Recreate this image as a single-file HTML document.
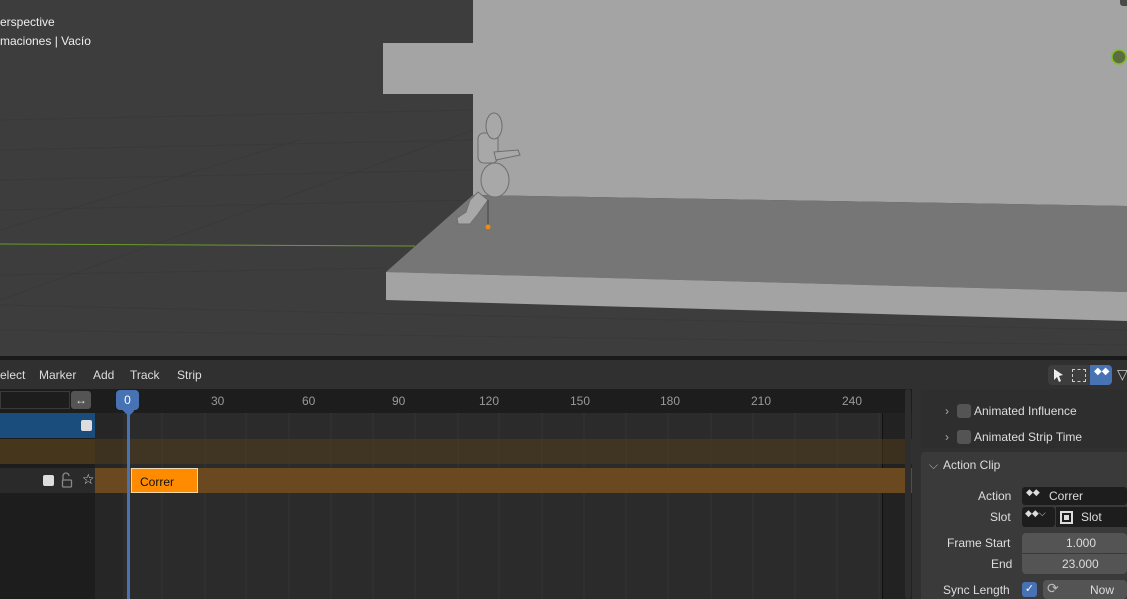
<!DOCTYPE html>
<html><head><meta charset="utf-8"><style>
*{margin:0;padding:0;box-sizing:border-box}
body{width:1127px;height:599px;overflow:hidden;background:#3d3d3d;font-family:"Liberation Sans","DejaVu Sans",sans-serif;font-size:12px;color:#ddd;position:relative}
.a{position:absolute}
.t{position:absolute;white-space:nowrap}
</style></head><body>
<svg class="a" style="left:0;top:0" width="1127" height="360">
<rect width="1127" height="360" fill="#3d3d3d"/>
<g stroke="#393939" stroke-width="1">
<line x1="0" y1="120" x2="473" y2="110"/><line x1="0" y1="150" x2="473" y2="140"/><line x1="0" y1="180" x2="473" y2="170"/>
<line x1="0" y1="210" x2="473" y2="200"/><line x1="0" y1="275" x2="386" y2="268"/><line x1="0" y1="305" x2="1127" y2="330"/>
<line x1="0" y1="330" x2="1127" y2="345"/><line x1="0" y1="230" x2="300" y2="140"/><line x1="0" y1="300" x2="473" y2="130"/>
</g>
<polygon points="473,0 1127,0 1127,206 473,195" fill="#a4a4a4"/>
<rect x="383" y="43" width="92" height="51" fill="#a4a4a4"/>
<line x1="0" y1="244" x2="415" y2="246" stroke="#6a9a2a" stroke-width="1"/>
<polygon points="473,195 1127,206 1127,292 386,272" fill="#767676"/>
<polygon points="386,272 1127,292 1127,321 386,300" fill="#a3a3a3"/>
<g fill="#a8a8a8" stroke="#6e6e6e" stroke-width="1">
<path d="M470 200 L478 192 L488 200 L478 214 L470 224 L458 224 L457 218 L466 212Z"/>
<ellipse cx="495" cy="180" rx="14" ry="17"/>
<rect x="478" y="133" width="20" height="30" rx="6"/>
<path d="M494 152 L518 150 L520 155 L496 160Z"/>
<ellipse cx="494" cy="126" rx="8" ry="13"/>
</g>
<line x1="488" y1="200" x2="488" y2="227" stroke="#444"/>
<circle cx="488" cy="227" r="2.5" fill="#f08a10"/>
<circle cx="1119" cy="57" r="7" fill="#5c6e40" stroke="#7bc020" stroke-width="1.5"/>
<rect x="1120" y="-4" width="12" height="10" rx="3" fill="#4a4a4a"/>
<rect x="0" y="356" width="1127" height="4" fill="#1a1a1a"/>
</svg>
<div class="t" style="left:0;top:15px;color:#eee;font-size:12px">erspective</div>
<div class="t" style="left:0;top:34px;color:#eee;font-size:12px">maciones | Vacío</div>

<!-- header -->
<div class="a" style="left:0;top:360px;width:1127px;height:29px;background:#303030"></div>
<div class="t" style="left:0;top:368px">elect</div>
<div class="t" style="left:39px;top:368px">Marker</div>
<div class="t" style="left:93px;top:368px">Add</div>
<div class="t" style="left:130px;top:368px">Track</div>
<div class="t" style="left:177px;top:368px">Strip</div>
<div class="a" style="left:1048px;top:365px;width:64px;height:20px;background:#3d3d3d;border-radius:4px"></div>
<div class="a" style="left:1090px;top:365px;width:22px;height:20px;background:#4772b3;border-radius:0 4px 4px 0"></div>
<svg class="a" style="left:1050px;top:366px" width="16" height="18"><path d="M4 3 L13 9 L9 10 L11 15 L9 16 L7 11 L4 14Z" fill="#eee"/></svg>
<div class="a" style="left:1072px;top:369px;width:14px;height:13px;border:1px dashed #ccc"></div>
<div class="t" style="left:1094px;top:366px;color:#fff;font-size:10px">◆◆</div>
<div class="t" style="left:1117px;top:366px;color:#ccc;font-size:14px">▽</div>

<!-- left channel panel -->
<div class="a" style="left:0;top:389px;width:95px;height:210px;background:#1d1d1d"></div>
<div class="a" style="left:0;top:391px;width:70px;height:18px;background:#1d1d1d;border:1px solid #3a3a3a"></div>
<div class="a" style="left:71px;top:391px;width:20px;height:18px;background:#545454;border-radius:3px;color:#ddd;text-align:center;line-height:18px">↔</div>
<div class="a" style="left:0;top:413px;width:95px;height:25px;background:#1a4c7c"></div>
<div class="a" style="left:81px;top:420px;width:11px;height:11px;background:#ddd;border-radius:2px"></div>
<div class="a" style="left:0;top:439px;width:95px;height:25px;background:#45361c"></div>
<div class="a" style="left:0;top:468px;width:95px;height:25px;background:#2a2a2a"></div>
<div class="a" style="left:43px;top:475px;width:11px;height:11px;background:#ddd;border-radius:2px"></div>
<svg class="a" style="left:60px;top:472px" width="14" height="16"><path d="M3 8 V4 a3 3 0 0 1 6 0" stroke="#888" fill="none" stroke-width="1.3"/><rect x="2.5" y="8" width="9" height="7" rx="1" stroke="#888" fill="none" stroke-width="1.3"/></svg>
<div class="t" style="left:82px;top:471px;color:#ddd;font-size:14px">☆</div>

<!-- timeline -->
<div class="a" style="left:95px;top:389px;width:817px;height:24px;background:#1d1d1d"></div>
<div class="a" style="left:95px;top:413px;width:817px;height:186px;background:#2b2b2b"></div>
<div class="a" style="left:882px;top:413px;width:30px;height:186px;background:#222"></div>
<div class="a" style="left:882px;top:413px;width:1px;height:186px;background:#111"></div>
<svg class="a" style="left:95px;top:413px" width="787" height="186"><g stroke="#333">
<line x1="67" y1="0" x2="67" y2="186"/><line x1="110" y1="0" x2="110" y2="186"/><line x1="151" y1="0" x2="151" y2="186"/><line x1="194" y1="0" x2="194" y2="186"/><line x1="236" y1="0" x2="236" y2="186"/><line x1="278" y1="0" x2="278" y2="186"/><line x1="320" y1="0" x2="320" y2="186"/><line x1="363" y1="0" x2="363" y2="186"/><line x1="404" y1="0" x2="404" y2="186"/><line x1="447" y1="0" x2="447" y2="186"/><line x1="489" y1="0" x2="489" y2="186"/><line x1="531" y1="0" x2="531" y2="186"/><line x1="573" y1="0" x2="573" y2="186"/><line x1="616" y1="0" x2="616" y2="186"/><line x1="658" y1="0" x2="658" y2="186"/><line x1="700" y1="0" x2="700" y2="186"/><line x1="742" y1="0" x2="742" y2="186"/><line x1="784" y1="0" x2="784" y2="186"/></g></svg>
<div class="a" style="left:95px;top:413px;width:28px;height:186px;background:#262626"></div>
<div class="a" style="left:95px;top:439px;width:817px;height:25px;background:rgba(90,65,25,0.45)"></div>
<div class="a" style="left:95px;top:468px;width:817px;height:25px;background:#6a4820"></div>
<div class="a" style="left:905px;top:389px;width:6px;height:210px;background:#2e2e2e;border-radius:3px"></div>
<div class="t" style="left:211px;top:394px;color:#999;font-size:12px">30</div>
<div class="t" style="left:302px;top:394px;color:#999">60</div>
<div class="t" style="left:392px;top:394px;color:#999">90</div>
<div class="t" style="left:479px;top:394px;color:#999">120</div>
<div class="t" style="left:570px;top:394px;color:#999">150</div>
<div class="t" style="left:660px;top:394px;color:#999">180</div>
<div class="t" style="left:751px;top:394px;color:#999">210</div>
<div class="t" style="left:842px;top:394px;color:#999">240</div>
<div class="a" style="left:127px;top:413px;width:3px;height:186px;background:#4772b3"></div>
<div class="a" style="left:116px;top:390px;width:23px;height:20px;background:#4772b3;border-radius:4px;color:#fff;text-align:center;line-height:20px">0</div>
<div class="a" style="left:123px;top:406px;width:10px;height:8px;background:#4772b3;transform:rotate(45deg)"></div>
<div class="a" style="left:131px;top:468px;width:67px;height:25px;background:#ff8c00;border:1px solid #f0d8b0;color:#111;padding:6px 0 0 8px">Correr</div>

<!-- right panel -->
<div class="a" style="left:912px;top:389px;width:215px;height:210px;background:#303030"></div>
<div class="a" style="left:921px;top:389px;width:206px;height:59px;background:#2e2e2e;border-radius:4px 0 0 4px"></div>
<div class="t" style="left:945px;top:404px;color:#aaa">›</div>
<div class="a" style="left:957px;top:404px;width:14px;height:14px;background:#545454;border-radius:3px"></div>
<div class="t" style="left:974px;top:404px;color:#ddd">Animated Influence</div>
<div class="t" style="left:945px;top:430px;color:#aaa">›</div>
<div class="a" style="left:957px;top:430px;width:14px;height:14px;background:#545454;border-radius:3px"></div>
<div class="t" style="left:974px;top:430px;color:#ddd">Animated Strip Time</div>
<div class="a" style="left:921px;top:452px;width:206px;height:147px;background:#3a3a3a;border-radius:4px 0 0 0"></div>
<div class="t" style="left:929px;top:458px;color:#aaa">⌵</div>
<div class="t" style="left:943px;top:458px;color:#ddd">Action Clip</div>
<div class="t" style="left:978px;top:489px;color:#ddd">Action</div>
<div class="a" style="left:1022px;top:487px;width:105px;height:18px;background:#1d1d1d;border-radius:3px"></div>
<div class="t" style="left:1026px;top:487px;color:#ddd;font-size:9px">◆◆</div>
<div class="t" style="left:1049px;top:489px;color:#ddd">Correr</div>
<div class="t" style="left:990px;top:510px;color:#ddd">Slot</div>
<div class="a" style="left:1022px;top:507px;width:33px;height:20px;background:#1d1d1d;border-radius:3px"></div>
<div class="t" style="left:1025px;top:508px;color:#ddd;font-size:9px">◆◆⌵</div>
<div class="a" style="left:1056px;top:507px;width:71px;height:20px;background:#1d1d1d"></div>
<div class="a" style="left:1060px;top:511px;width:13px;height:13px;border:2px solid #ddd;background:#ddd;box-shadow:inset 0 0 0 2px #1d1d1d"></div>
<div class="t" style="left:1081px;top:510px;color:#ddd">Slot</div>
<div class="t" style="left:947px;top:536px;color:#ddd">Frame Start</div>
<div class="a" style="left:1022px;top:533px;width:105px;height:20px;background:#545454;border-radius:4px 4px 0 0"></div>
<div class="t" style="left:1066px;top:536px;color:#ddd">1.000</div>
<div class="t" style="left:991px;top:557px;color:#ddd">End</div>
<div class="a" style="left:1022px;top:554px;width:105px;height:20px;background:#545454;border-radius:0 0 4px 4px"></div>
<div class="t" style="left:1062px;top:557px;color:#ddd">23.000</div>
<div class="t" style="left:943px;top:583px;color:#ddd">Sync Length</div>
<div class="a" style="left:1022px;top:582px;width:15px;height:15px;background:#4772b3;border-radius:3px;color:#fff;font-size:11px;text-align:center;line-height:15px">✓</div>
<div class="a" style="left:1043px;top:580px;width:84px;height:19px;background:#545454;border-radius:4px"></div>
<div class="t" style="left:1047px;top:580px;color:#bbb;font-size:14px">⟳</div>
<div class="t" style="left:1090px;top:583px;color:#ddd">Now</div>
</body></html>
